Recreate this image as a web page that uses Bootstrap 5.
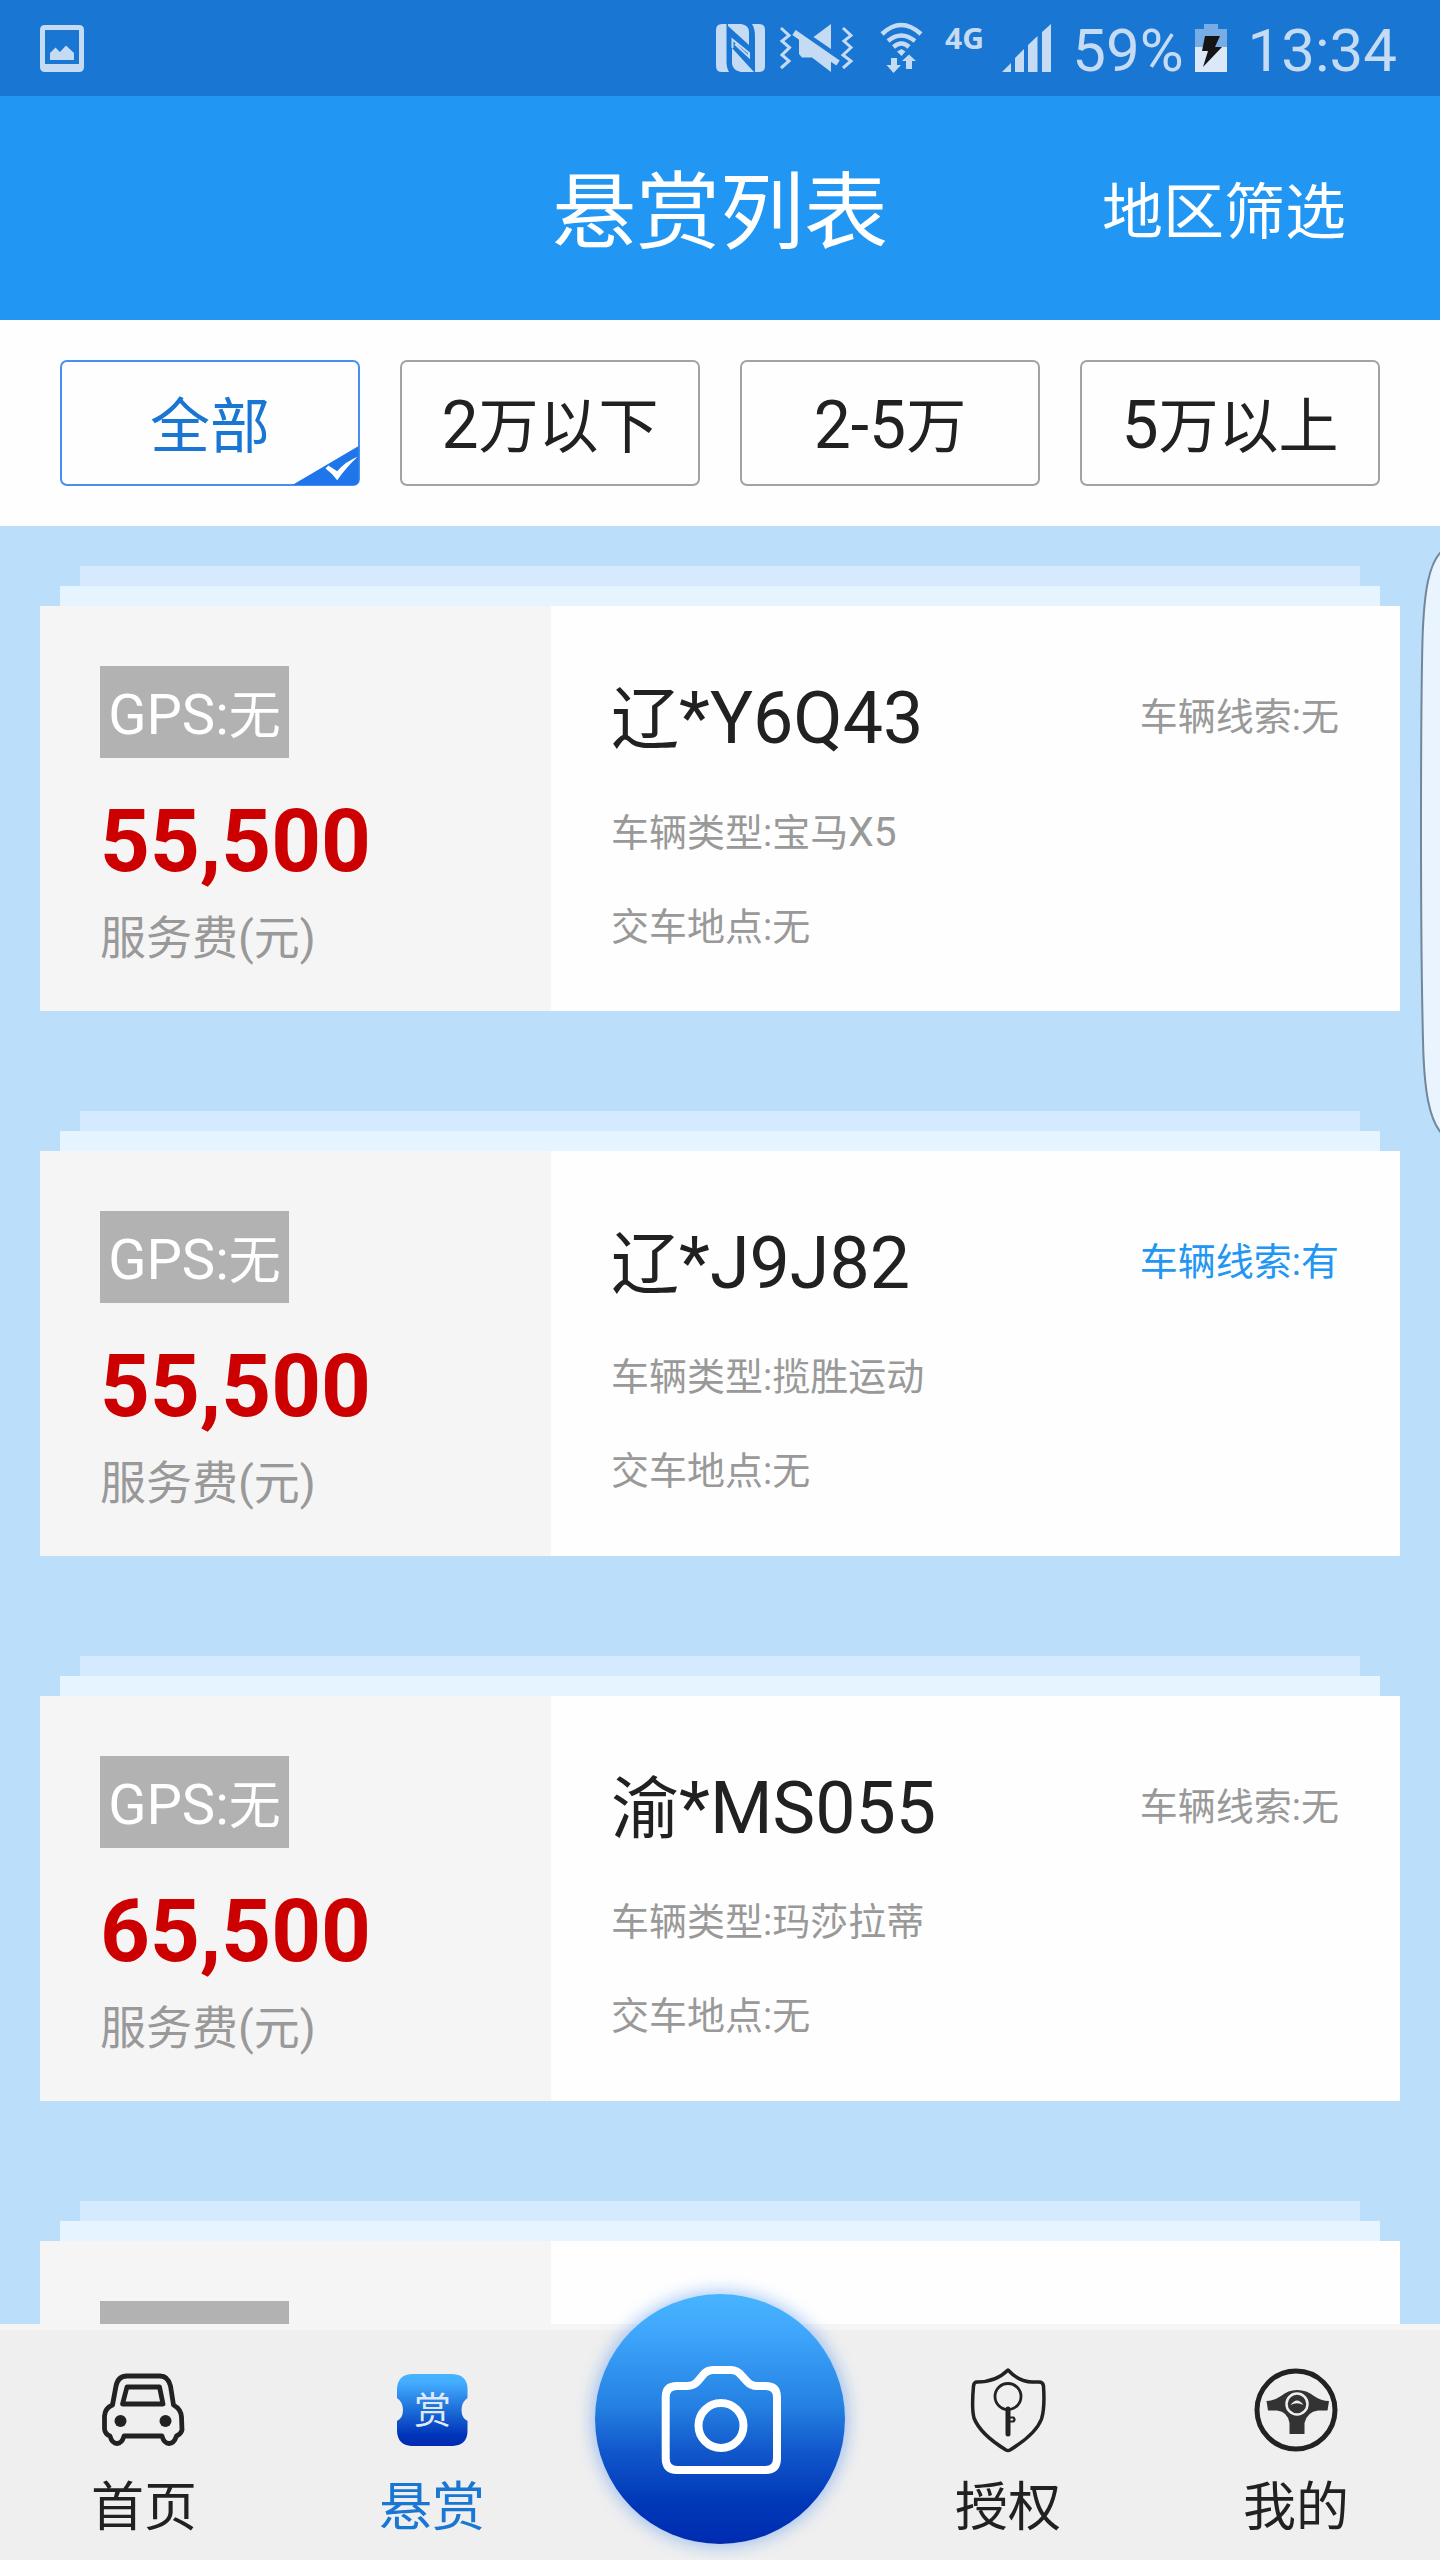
<!DOCTYPE html>
<html lang="zh-CN">
<head>
<meta charset="utf-8">
<meta name="viewport" content="width=device-width, initial-scale=1">
<title>悬赏列表</title>
<link href="https://cdn.jsdelivr.net/npm/bootstrap@5.3.0/dist/css/bootstrap.min.css" rel="stylesheet">
<style>
  html, body { height: 2560px; overflow: hidden; }
  body { font-family: Roboto, "Noto Sans CJK SC", sans-serif; color: #212121; background: #bbdefb; line-height: 1; width: 1440px; position: relative; }
  svg { display: block; flex: none; }
  .lat { font-size: 1.07em; }
  .statusbar { height: 96px; background: #1976d2; color: #c5dbf4; font-size: 60px; padding-left: 40px; padding-right: 43px; }
  .statusbar span { padding-top: 6px; }
  .charge { margin-left: 20px; margin-right: 11px; }
  .clock { margin-left: 21px; }
  .appbar { height: 224px; background: #2196f3; color: #fff; }
  .appbar h1 { font-size: 84px; line-height: 84px; padding-top: 12px; }
  .region { font-size: 61px; right: 94px; top: 87px; line-height: 61px; }
  .filters { height: 206px; background: #fefefe; padding: 40px 60px; gap: 40px; }
  .filters .btn { flex: 1 1 0; padding: 0; height: 126px; border: 2px solid #a3a3a3; border-radius: 7px; font-size: 60px; line-height: 131px; color: #212121; background: #fefefe; white-space: nowrap; }
  .filters .btn.chosen { border-color: #4a8fee; color: #1976d2; }
  .filters .lat { font-size: 1.1em; line-height: 1; }
  .tick { right: -1px; bottom: -1px; }
  .feed { height: 1798px; padding-top: 40px; overflow: hidden; }
  .stack { margin: 0 40px 100px; }
  .sheet2 { height: 20px; margin: 0 40px; background: #d5eaff; }
  .sheet1 { height: 20px; margin: 0 20px; background: #e6f4ff; }
  .bounty { height: 405px; background: #fefefe; }
  .fee { width: 511px; background: #f5f5f5; padding: 60px; }
  .gps { width: 189px; height: 92px; background: #b2b2b2; color: #fff; font-size: 52px; line-height: 101px; white-space: nowrap; }
  .gps .lat { line-height: 1; font-size: 1.08em; }
  .amount { font-size: 87px; line-height: 88px; font-weight: 700; color: #c00; margin-top: 39px; }
  .dim { color: #999; }
  .unit { font-size: 46px; line-height: 46px; margin-top: 30px; }
  .info { padding: 60px 60px 0; }
  .plate { font-size: 68px; line-height: 68px; padding-top: 4px; }
  .plate .lat { font-size: 1.055em; }
  .headline { height: 102px; }
  .note { font-size: 38px; line-height: 38px; }
  .clue { margin-right: 1px; padding-bottom: 1px; }
  .kind { margin-top: 45px; }
  .place { margin-top: 56px; }
  .hint { color: #2196f3; }
  .tabbar { height: 236px; background: #efefef; border-top: 6px solid #f5f5f5; }
  .tabbar a { flex: 1 1 0; color: #212121; font-size: 53px; line-height: 54px; padding-top: 36px; }
  .tabbar a svg { margin-bottom: 25px; }
  .tabbar a.now { color: #1976d2; }
  .shutter { width: 250px; height: 250px; left: 595px; top: 2294px; background: linear-gradient(#48b4ff, #3fa7fc 15%, #2480e2 45%, #1157cb 63%, #0038b8 83%, #002bb0); box-shadow: 0 0 16px 3px rgba(33,118,240,.38); }
  .edge { left: 1415px; top: 540px; }
</style>
</head>
<body>
<div class="statusbar d-flex align-items-center">
  <svg width="44" height="48" viewBox="0 0 44 48"><path fill="#c5dbf4" fill-rule="evenodd" d="M5 1H39Q44 1 44 6V43Q44 48 39 48H5Q0 48 0 43V6Q0 1 5 1ZM5 6V40H39V6ZM10 36V29L15.500 23.500L20 28L26 21.500L34 29V36Z"/></svg>
  <svg class="ms-auto" width="336" height="80" viewBox="716 9 336 80" fill="#c5dbf4">
    <path d="M722 25H726.500V64Q727 70 729 73H722Q716 73 716 67V31Q716 25 722 25ZM728 25H741Q749 26 749 33V46L728 27ZM752 25H759Q765 25 765 31V67Q765 73 759 73H755V38Q755 29 752 25ZM732 49L754 73H741Q732 71 732 64Z"/>
    <path d="M732.500 49V40.500L749 54V58L735 45" fill="none" stroke="#c5dbf4" stroke-width="2"/>
    <path d="M781 29L789 36.500L782 42L789.500 48.500L782 56L789 62L781 69M843 29L851 36.500L844 42L851 48.500L843 56L851 62L843 69" fill="none" stroke="#c5dbf4" stroke-width="3"/>
    <path d="M831 25V50L813.500 38ZM799 40H804L831 60V73L812 58.500H802L799 55Z"/>
    <path d="M794 33.500L838 64" stroke="#c5dbf4" stroke-width="6"/>
    <path d="M882 35Q901 17 921 35M888 42Q901 31 915 42M893.500 48Q901.500 41 909 48" fill="none" stroke="#c5dbf4" stroke-width="4.500"/>
    <path d="M897 52.500L901.500 50L905.500 52.500L901.500 57ZM891 59H897V66H901L893.500 74L886.500 66H891ZM906 70V62H902L909 55.500L916 62H912V70Z"/>
    <path d="M1002 73L1011 64V73ZM1015 73V59L1024 50V73ZM1028 73V46L1037.500 37V73ZM1042 73V33L1051 25V73Z"/>
    <text x="945" y="49.500" font-family="Open Sans" font-weight="700" font-size="29" textLength="39" lengthAdjust="spacingAndGlyphs">4G</text>
  </svg>
  <span class="charge">59%</span>
  <svg width="32" height="50" viewBox="0 0 32 50"><path fill="#78ace4" d="M0 6H9V1H23V6H32V24H0Z"/><path fill="#dbe8f8" d="M0 24H32V49H0Z"/><path fill="#151515" d="M10 13H25L20 24H27L8 44L13 28H7Z"/></svg>
  <span class="clock">13:34</span>
</div>
<header class="appbar position-relative d-flex align-items-center justify-content-center">
  <h1 class="m-0 fw-normal">悬赏列表</h1>
  <span class="region position-absolute">地区筛选</span>
</header>
<nav class="filters d-flex">
  <button class="btn chosen position-relative">全部<svg class="tick position-absolute" width="67" height="39" viewBox="0 0 68 40"><path fill="#1f75ea" d="M0 40L68 0V35Q68 40 63 40Z"/><path fill="#fff" d="M34 23L37 20L46 26Q54 16 67 11Q56 21 46 35Q41 28 34 23Z"/></svg></button>
  <button class="btn"><span class="lat">2</span>万以下</button>
  <button class="btn"><span class="lat">2-5</span>万</button>
  <button class="btn"><span class="lat">5</span>万以上</button>
</nav>
<main class="feed">
  <section class="stack"><div class="sheet2"></div><div class="sheet1"></div>
    <div class="bounty d-flex">
      <div class="fee"><div class="gps text-center"><span class="lat">GPS:</span>无</div><div class="amount">55,500</div><div class="unit dim">服务费(元)</div></div>
      <div class="info flex-grow-1">
        <div class="headline d-flex justify-content-between align-items-center"><span class="plate">辽<span class="lat">*Y6Q43</span></span><span class="note clue dim">车辆线索:无</span></div>
        <div class="note dim kind">车辆类型:宝马<span class="lat">X5</span></div>
        <div class="note dim place">交车地点:无</div>
      </div>
    </div>
  </section>
  <section class="stack"><div class="sheet2"></div><div class="sheet1"></div>
    <div class="bounty d-flex">
      <div class="fee"><div class="gps text-center"><span class="lat">GPS:</span>无</div><div class="amount">55,500</div><div class="unit dim">服务费(元)</div></div>
      <div class="info flex-grow-1">
        <div class="headline d-flex justify-content-between align-items-center"><span class="plate">辽<span class="lat">*J9J82</span></span><span class="note clue hint">车辆线索:有</span></div>
        <div class="note dim kind">车辆类型:揽胜运动</div>
        <div class="note dim place">交车地点:无</div>
      </div>
    </div>
  </section>
  <section class="stack"><div class="sheet2"></div><div class="sheet1"></div>
    <div class="bounty d-flex">
      <div class="fee"><div class="gps text-center"><span class="lat">GPS:</span>无</div><div class="amount">65,500</div><div class="unit dim">服务费(元)</div></div>
      <div class="info flex-grow-1">
        <div class="headline d-flex justify-content-between align-items-center"><span class="plate">渝<span class="lat">*MS055</span></span><span class="note clue dim">车辆线索:无</span></div>
        <div class="note dim kind">车辆类型:玛莎拉蒂</div>
        <div class="note dim place">交车地点:无</div>
      </div>
    </div>
  </section>
  <section class="stack"><div class="sheet2"></div><div class="sheet1"></div>
    <div class="bounty d-flex"><div class="fee"><div class="gps"></div></div></div>
  </section>
</main>
<footer class="tabbar d-flex">
  <a class="d-flex flex-column align-items-center text-decoration-none">
    <svg width="90" height="90" viewBox="99 2366 90 90" fill="none" stroke="#222" stroke-width="4.800" stroke-linejoin="round"><path d="M127 2376H160Q168 2376 170.500 2386L173.500 2405Q181 2409 181.500 2417L182 2430Q181 2434 176.500 2436Q174 2443.500 169 2443.500Q164 2443.500 162 2436H124Q122 2443.500 117 2443.500Q112 2443.500 110 2436Q105 2434 104.500 2429V2416Q105 2408 112.500 2405L116 2386Q118 2376 127 2376Z"/><path d="M127 2387H159.500L163 2404H122.500Z"/><g fill="#222" stroke="none"><circle cx="120.500" cy="2421" r="6"/><circle cx="165.500" cy="2421" r="6"/></g></svg>
    首页</a>
  <a class="now d-flex flex-column align-items-center text-decoration-none">
    <svg width="90" height="90" viewBox="387.500 2366 90 90"><defs><linearGradient id="ticketFill" x2="0" y2="1"><stop offset="0" stop-color="#48b4ff"/><stop offset=".12" stop-color="#43acff"/><stop offset=".5" stop-color="#1c6ed8"/><stop offset=".85" stop-color="#0034b8"/><stop offset="1" stop-color="#002bb0"/></linearGradient></defs><path fill="url(#ticketFill)" d="M412 2374H453Q468 2375 468 2389V2398Q462 2402 462 2410T468 2421V2431Q468 2445 453 2446H412Q398 2445 397.500 2431V2421Q403.500 2418 403.500 2410T397.500 2398V2389Q398 2375 412 2374Z"/><text x="433" y="2424" text-anchor="middle" font-family="Noto Sans CJK SC" font-size="37" fill="#dfe9f8">赏</text></svg>
    悬赏</a>
  <a></a>
  <a class="d-flex flex-column align-items-center text-decoration-none">
    <svg width="90" height="90" viewBox="962 2366 90 90" fill="none" stroke="#222" stroke-width="3.500" stroke-linejoin="round"><path d="M1007 2370Q1018 2382 1031 2382H1038Q1042 2382 1042.500 2386Q1044 2408 1040.500 2419C1036 2431 1022 2442 1009 2450Q1007 2451 1005 2450C992 2442 978 2431 973 2418Q970.500 2408 972.500 2386Q973 2382 976 2382Q995 2382 1007 2370Z"/><circle cx="1007" cy="2396.500" r="13" stroke-width="2.800"/><path d="M1007 2409V2434" stroke-width="5" stroke-linecap="round"/><path d="M1009 2417.500H1012.500Q1014.500 2419.500 1012.500 2421.500H1009" stroke-width="2.200"/></svg>
    授权</a>
  <a class="d-flex flex-column align-items-center text-decoration-none">
    <svg width="90" height="90" viewBox="1251 2366 90 90"><circle cx="1296" cy="2410" r="39" fill="none" stroke="#222" stroke-width="5"/><path fill="#333" d="M1266.500 2401Q1274 2401 1281 2396Q1288 2390 1297 2390Q1307 2390 1314 2396Q1321 2401 1329 2401L1327.500 2410.500H1318Q1307 2412 1304.500 2423V2434H1289.500V2423Q1288 2412 1277 2410.500H1268Z"/><circle cx="1297" cy="2404" r="10.500" fill="#333" stroke="#efefef" stroke-width="2.500"/><path d="M1290.500 2405Q1297 2396 1303.500 2405Q1297 2401.500 1290.500 2405Z" fill="#efefef"/></svg>
    我的</a>
</footer>
<div class="shutter position-absolute rounded-circle">
  <svg width="250" height="250" viewBox="595 2294 250 250" fill="none" stroke="#fff" stroke-width="8"><path d="M677 2386H687Q694 2386 698 2381L703 2375Q707 2370 713 2370H731Q737 2370 741 2375L747 2381.500Q751 2386 757 2386H765.500Q777 2386 777 2397V2458Q777 2470 765.500 2470H677Q665.700 2470 665.700 2458V2397Q665.700 2386 677 2386Z"/><circle cx="721" cy="2425.500" r="22.500"/></svg>
</div>
<svg class="edge position-absolute" width="25" height="605" viewBox="1415 540 25 605"><path fill="#e9f4fe" stroke="#71879a" stroke-width="2" d="M1443 550C1429 562 1424 590 1422.500 640Q1421 700 1421 830Q1421 960 1423 1040C1424 1090 1429 1121 1443 1135Z"/></svg>
<script src="https://cdn.jsdelivr.net/npm/bootstrap@5.3.0/dist/js/bootstrap.bundle.min.js"></script>
</body>
</html>
